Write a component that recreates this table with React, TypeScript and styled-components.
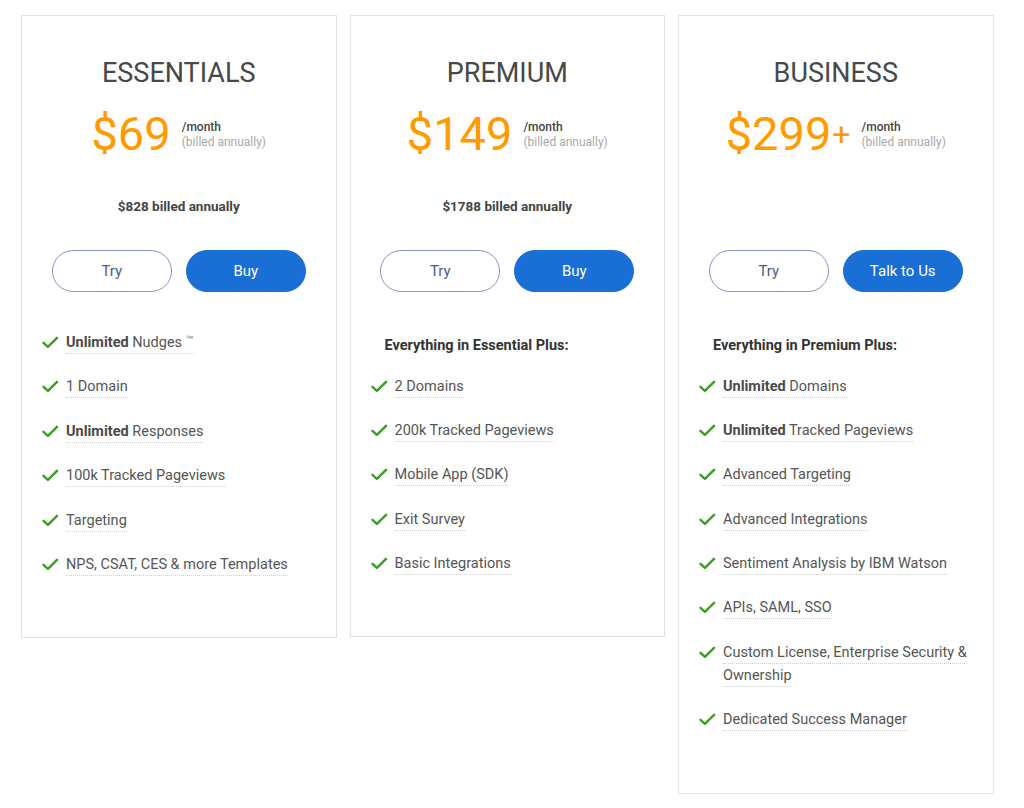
import React from "react";
import styled, { createGlobalStyle } from "styled-components";

const GlobalStyle = createGlobalStyle`
  * { box-sizing: border-box; }
  body {
    margin: 0;
    background: #ffffff;
    font-family: Roboto, "Liberation Sans", Arial, sans-serif;
  }
`;

const Page = styled.div`
  display: flex;
  align-items: flex-start;
  gap: 13px;
  padding: 15px 0 0 21px;
`;

const Card = styled.div`
  width: 315.5px;
  border: 1px solid #e1e1e1;
  background: #fff;
  padding: 42px 20px 40px 20px;
  display: flex;
  flex-direction: column;
`;

const Title = styled.h2`
  margin: 0;
  font-size: 27px;
  line-height: 30px;
  font-weight: 400;
  color: #484848;
  text-align: center;
`;

const PriceRow = styled.div`
  margin-top: 22px;
  display: flex;
  justify-content: center;
  align-items: center;
  gap: 11px;
`;

const Amount = styled.div`
  font-size: 47px;
  line-height: 48px;
  color: #ff9a00;
  display: flex;
  align-items: center;
`;

const Plus = styled.span`
  font-size: 32px;
  line-height: 32px;
  margin-left: 1px;
`;

const Period = styled.div`
  display: flex;
  flex-direction: column;
  font-size: 12px;
  line-height: 15px;
  padding-top: 2px;
`;

const PerMonth = styled.span`
  color: #444;
  font-weight: 500;
`;

const Billed = styled.span`
  color: #a9a9a9;
`;

const Annual = styled.div`
  margin-top: 38px;
  height: 20px;
  font-size: 13.5px;
  line-height: 20px;
  font-weight: 700;
  color: #444;
  text-align: center;
`;

const Buttons = styled.div`
  margin-top: 34px;
  display: flex;
  justify-content: center;
  gap: 14px;
`;

const Button = styled.button<{ $primary?: boolean }>`
  width: 120px;
  height: 42px;
  border-radius: 21px;
  font-family: Roboto, "Liberation Sans", Arial, sans-serif;
  font-size: 15px;
  cursor: pointer;
  border: 1px solid ${(p) => (p.$primary ? "#1a6fd6" : "#8596c4")};
  background: ${(p) => (p.$primary ? "#1a6fd6" : "#ffffff")};
  color: ${(p) => (p.$primary ? "#ffffff" : "#4a5d8e")};
`;

const Features = styled.div`
  margin-top: 39px;
`;

const FeatureHeader = styled.div`
  padding: 3px 0 0 14px;
  margin-bottom: 17.5px;
  font-size: 14.5px;
  line-height: 23px;
  font-weight: 700;
  color: #333;
`;

const List = styled.ul`
  list-style: none;
  margin: 0;
  padding: 0;
`;

const Item = styled.li`
  display: flex;
  align-items: flex-start;
  gap: 7px;
  margin-bottom: 21.4px;
  font-size: 14.5px;
  line-height: 23px;
  color: #555;
`;

const CheckBox = styled.span`
  flex: 0 0 17px;
  height: 23px;
  display: flex;
  align-items: center;
`;

const ItemText = styled.span`
  flex: 1;
  min-width: 0;
`;

const Underlined = styled.span`
  border-bottom: 1px dotted #cfcfcf;
  padding-bottom: 2px;
`;

const Strong = styled.b`
  font-weight: 700;
  color: #4a4a4a;
`;

const TM = styled.span`
  font-size: 12px;
  color: #777;
  margin-left: 4px;
  vertical-align: 3px;
  line-height: 0;
`;

const Check = () => (
  <svg width="17" height="13" viewBox="0 0 17 13" aria-hidden="true">
    <path
      d="M1.5 6.8 L5.9 10.8 L15 1.8"
      fill="none"
      stroke="#3a9e22"
      strokeWidth="2.4"
      strokeLinecap="round"
      strokeLinejoin="round"
    />
  </svg>
);

type Feature = { bold?: string; text: string; tm?: boolean };

type Plan = {
  name: string;
  price: string;
  plus?: boolean;
  annual?: string;
  cta: string;
  header?: string;
  features: Feature[];
};

const plans: Plan[] = [
  {
    name: "ESSENTIALS",
    price: "$69",
    annual: "$828 billed annually",
    cta: "Buy",
    features: [
      { bold: "Unlimited", text: " Nudges", tm: true },
      { text: "1 Domain" },
      { bold: "Unlimited", text: " Responses" },
      { text: "100k Tracked Pageviews" },
      { text: "Targeting" },
      { text: "NPS, CSAT, CES & more Templates" },
    ],
  },
  {
    name: "PREMIUM",
    price: "$149",
    annual: "$1788 billed annually",
    cta: "Buy",
    header: "Everything in Essential Plus:",
    features: [
      { text: "2 Domains" },
      { text: "200k Tracked Pageviews" },
      { text: "Mobile App (SDK)" },
      { text: "Exit Survey" },
      { text: "Basic Integrations" },
    ],
  },
  {
    name: "BUSINESS",
    price: "$299",
    plus: true,
    cta: "Talk to Us",
    header: "Everything in Premium Plus:",
    features: [
      { bold: "Unlimited", text: " Domains" },
      { bold: "Unlimited", text: " Tracked Pageviews" },
      { text: "Advanced Targeting" },
      { text: "Advanced Integrations" },
      { text: "Sentiment Analysis by IBM Watson" },
      { text: "APIs, SAML, SSO" },
      { text: "Custom License, Enterprise Security & Ownership" },
      { text: "Dedicated Success Manager" },
    ],
  },
];

const PlanCard = ({ plan }: { plan: Plan }) => (
  <Card>
    <Title>{plan.name}</Title>
    <PriceRow>
      <Amount>
        {plan.price}
        {plan.plus && <Plus>+</Plus>}
      </Amount>
      <Period>
        <PerMonth>/month</PerMonth>
        <Billed>(billed annually)</Billed>
      </Period>
    </PriceRow>
    <Annual>{plan.annual ?? ""}</Annual>
    <Buttons>
      <Button>Try</Button>
      <Button $primary>{plan.cta}</Button>
    </Buttons>
    <Features>
      {plan.header && <FeatureHeader>{plan.header}</FeatureHeader>}
      <List>
        {plan.features.map((f, i) => (
          <Item key={i}>
            <CheckBox>
              <Check />
            </CheckBox>
            <ItemText>
              <Underlined>
                {f.bold && <Strong>{f.bold}</Strong>}
                {f.text}
                {f.tm && <TM>™</TM>}
              </Underlined>
            </ItemText>
          </Item>
        ))}
      </List>
    </Features>
  </Card>
);

export default function App() {
  return (
    <>
      <GlobalStyle />
      <Page>
        {plans.map((p) => (
          <PlanCard key={p.name} plan={p} />
        ))}
      </Page>
    </>
  );
}
